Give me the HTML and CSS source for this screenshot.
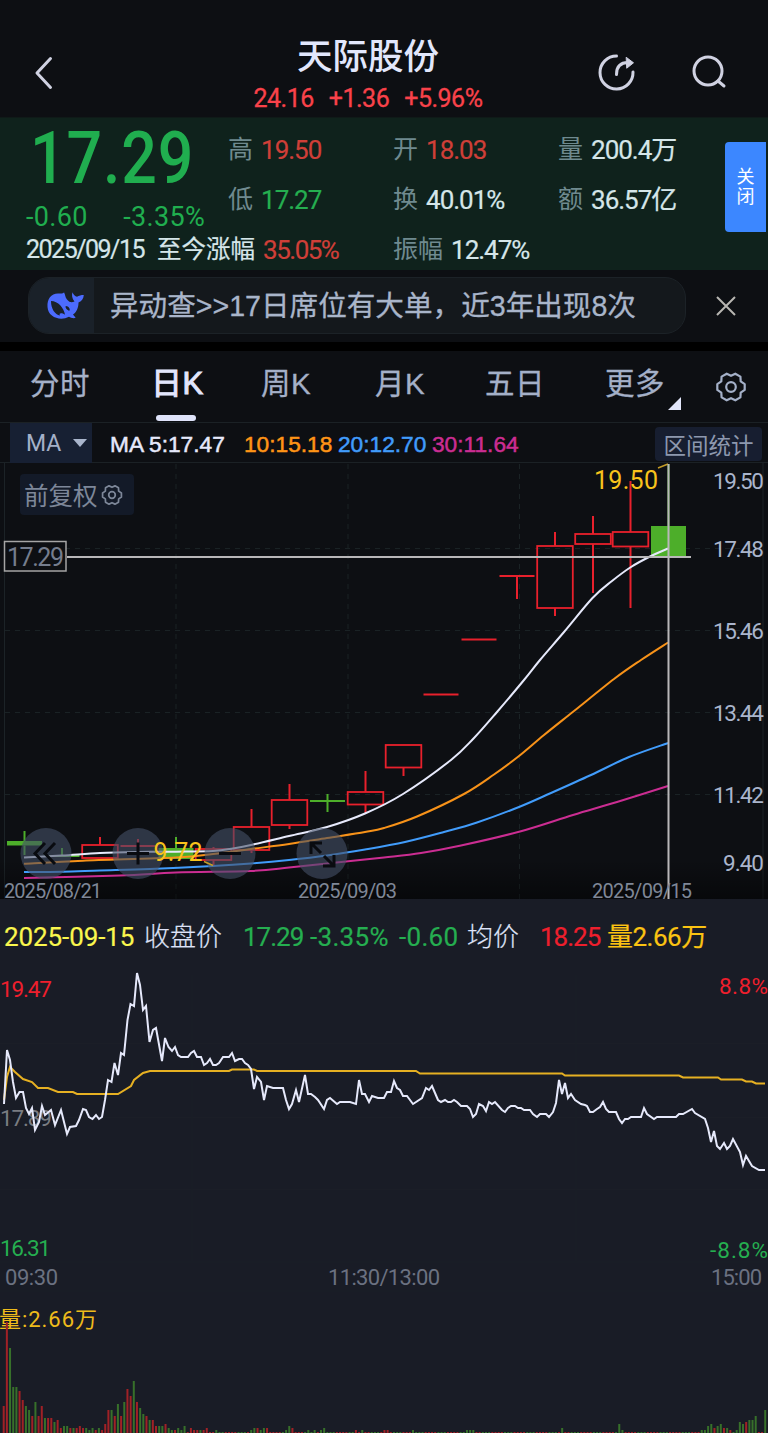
FILE: index.html
```html
<!DOCTYPE html>
<html lang="zh-CN">
<head>
    <meta charset="UTF-8">
    <meta name="viewport" content="width=device-width, initial-scale=1.0">
    <title>天际股份</title>
    <link rel="stylesheet" href="styles.css">
</head>
<body>
    <svg class="defs" width="0" height="0">
        <symbol id="gear" viewBox="0 0 32 32">
            <path d="M16 4.800 L20.300 2.700 L25.400 5.600 L25.700 10.400 L29.700 13.100 V18.900 L25.700 21.600 L25.400 26.400 L20.300 29.300 L16 27.200 L11.700 29.300 L6.600 26.400 L6.300 21.600 L2.300 18.900 V13.100 L6.300 10.400 L6.600 5.600 L11.700 2.700 Z"/>
            <circle cx="16" cy="16" r="4.800"/>
        </symbol>
    </svg>

    <header class="header">
        <svg class="back" width="20" height="34" viewBox="0 0 20 34"><path d="M16.500 2.500 L3 17 L16.500 31.500"/></svg>
        <div class="title">
            <h1>天际股份</h1>
            <div class="title-quote"><span>24.16</span><span>+1.36</span><span>+5.96%</span></div>
        </div>
        <svg class="share" width="40" height="40" viewBox="0 0 40 40">
            <path d="M19.500 3 A16.500 16.500 0 1 0 36 19"/>
            <path d="M19.500 21.500 C19.500 14 23 9.500 31 9.500"/>
            <path class="solid" d="M29.500 4.500 L36.500 9.800 L30 15 Z"/>
        </svg>
        <svg class="search" width="36" height="36" viewBox="0 0 36 36">
            <circle cx="17" cy="17" r="14"/><path d="M27 27 L33 32"/>
        </svg>
    </header>

    <section class="quote">
        <div class="now">
            <div class="price">17.29</div>
            <div class="change"><span>-0.60</span><span>-3.35%</span></div>
        </div>
        <div class="stat"><label>高</label><b class="red">19.50</b></div>
        <div class="stat"><label>开</label><b class="red">18.03</b></div>
        <div class="stat"><label>量</label><b>200.4万</b></div>
        <div class="stat"><label>低</label><b class="green">17.27</b></div>
        <div class="stat"><label>换</label><b>40.01%</b></div>
        <div class="stat"><label>额</label><b>36.57亿</b></div>
        <div class="stat since"><b>2025/09/15</b><b class="cn">至今涨幅</b><b class="red">35.05%</b></div>
        <div class="stat"><label>振幅</label><b>12.47%</b></div>
        <button class="close-tab">关<br>闭</button>
    </section>

    <section class="notice">
        <div class="pill">
            <div class="whale">
                <svg width="38" height="28" viewBox="0 0 38 28">
                    <path fill-rule="evenodd" d="M.5 15 C0 7 4 1.500 11 1.500 C14 1.500 16 2 17 .3 C18.500 3 18 5 20 7.500 C23 11 25 10.500 27.500 9.500 C25 6.500 24.500 3 25.500 .3 C26.500 3 28 4.300 30 4.800 C32 3.500 34 3 36.800 3 C36.500 6.500 35 9 31.500 10.500 C31.500 15 30 20 26 22.500 C27 24 28.500 25 28.500 26 C25.500 26.500 23.500 25.500 22 24.800 C13 29.500 1 25 .5 15 Z M4 9 C4 17 8 22.500 13 23.500 C11.500 21 14.500 20.500 18 22.800 C17 16 11 9 4 9 Z M19 14 C17 15 21.500 19.500 22.500 18.500 C23.500 17 21.500 14 19 14 Z"/>
                </svg>
            </div>
            <p>异动查&gt;&gt;17日席位有大单，近3年出现8次</p>
        </div>
        <svg class="close" width="22" height="22" viewBox="0 0 22 22"><path d="M2 2 L20 20 M20 2 L2 20"/></svg>
    </section>

    <nav class="tabs">
        <a>分时</a>
        <a class="active">日K</a>
        <a>周K</a>
        <a>月K</a>
        <a>五日</a>
        <a class="more">更多</a>
        <svg class="gear" width="32" height="32"><use href="#gear"/></svg>
    </nav>

    <section class="ma-bar">
        <div class="ma-select">MA<i></i></div>
        <span class="ma5">MA 5:17.47</span>
        <span class="ma10">10:15.18</span>
        <span class="ma20">20:12.70</span>
        <span class="ma30">30:11.64</span>
        <button class="range">区间统计</button>
    </section>

    <section class="kline">
        <svg width="768" height="436" viewBox="0 463 768 436">
            <defs>
                <linearGradient id="fade" x1="0" y1="0" x2="0" y2="1">
                    <stop offset="0" stop-color="#000" stop-opacity="0"/>
                    <stop offset="1" stop-color="#000" stop-opacity=".45"/>
                </linearGradient>
            </defs>
            <path class="grid" d="M5 548.500 H762 M5 630.500 H762 M5 712.500 H762 M5 794.500 H762 M176 464 V899 M348 464 V899 M519.500 464 V899"/>
            <path class="frame" d="M4.500 463 V899 M763 463 V899"/>
            <rect y="860" width="768" height="39" fill="url(#fade)"/>
            <g id="candles"></g>
            <g id="ma-lines"></g>
            <g class="tools">
                <circle cx="46" cy="853.500" r="25.500"/>
                <circle cx="138" cy="853.500" r="25.500"/>
                <circle cx="230" cy="853.500" r="25.500"/>
                <circle cx="322" cy="853.500" r="25.500"/>
                <path d="M45 843 L35 853.500 L45 864 M55 843 L45 853.500 L55 864"/>
                <path d="M127 853.500 H149 M138 842.500 V864.500"/>
                <path d="M219 853.500 H241"/>
                <path d="M311 854 V843 H322 M311 843 L321 853 M334 855 V866 H323 M334 866 L324 856"/>
            </g>
            <path class="mark" d="M204 861.500 L213 865.500 M658 468 L668 464"/>
            <text class="extreme" x="153.500" y="861" textLength="49">9.72</text>
            <text class="extreme" x="594" y="488.500" textLength="64">19.50</text>
            <path class="cross" d="M67 557 H691 M668.500 464 V899"/>
            <rect class="tag" x="4.500" y="541.500" width="61.500" height="29.500"/>
            <text class="tag-text" x="7" y="566" textLength="57">17.29</text>
            <g class="axis">
                <text x="713" y="489" textLength="51">19.50</text>
                <text x="713" y="556.500" textLength="51">17.48</text>
                <text x="713" y="638.500" textLength="51">15.46</text>
                <text x="713" y="720.500" textLength="51">13.44</text>
                <text x="713" y="802.500" textLength="51">11.42</text>
                <text x="723" y="870.500" textLength="41">9.40</text>
            </g>
            <g class="dates">
                <text x="4" y="897.500" textLength="98">2025/08/21</text>
                <text x="298" y="897.500" textLength="99">2025/09/03</text>
                <text x="592" y="897.500" textLength="100">2025/09/15</text>
            </g>
        </svg>
        <div class="fuquan">前复权<svg width="22" height="22"><use href="#gear"/></svg></div>
    </section>

    <section class="minute">
        <div class="minute-head">
            <span class="yellow">2025-09-15</span>
            <span class="name">收盘价</span>
            <span class="green">17.29</span>
            <span class="green wide">-3.35%</span>
            <span class="green wide">-0.60</span>
            <span class="name">均价</span>
            <span class="red">18.25</span>
            <span class="gold">量2.66万</span>
        </div>
        <svg width="768" height="458" viewBox="0 975 768 458">
            <path class="minute-grid" d="M0 1043.500 H768 M0 1117.500 H768 M0 1189.500 H768 M0 1262 H768 M0 1291 H768 M192 975 V1262 M576 975 V1262"/>
            <g class="scale">
                <text class="up" x="0" y="996.500" textLength="52">19.47</text>
                <text class="flat" x="0" y="1126" textLength="52">17.89</text>
                <text class="down" x="0" y="1256" textLength="51">16.31</text>
                <text class="up" x="719" y="994" textLength="49">8.8%</text>
                <text class="down" x="710" y="1258" textLength="58">-8.8%</text>
            </g>
            <g class="times">
                <text x="5" y="1284.500" textLength="53">09:30</text>
                <text x="328" y="1284.500" textLength="112">11:30/13:00</text>
                <text x="711" y="1284.500" textLength="51">15:00</text>
            </g>
            <g id="minute-lines"></g>
            <text class="volume-text" x="-1" y="1327" textLength="98">量:2.66万</text>
            <g id="volume"></g>
        </svg>
    </section>

    <script src="script.js"></script>
</body>
</html>
```
FILE: styles.css
```css
* {
    box-sizing: border-box;
}

body {
    margin: 0;
    width: 768px;
    height: 1433px;
    overflow: hidden;
    background-color: #0d0f13;
    color: #b0bbd0;
    font-family: Roboto, "Noto Sans CJK SC", sans-serif;
}

svg {
    display: block;
    fill: none;
    overflow: visible;
}

.defs {
    position: absolute;
}

button {
    border: none;
    padding: 0;
    font-family: inherit;
}

.red {
    color: #cf3f38;
}

.green {
    color: #25ae50;
}

/* 顶部 */
.header {
    display: flex;
    height: 118px;
    padding-left: 34px;
    border-bottom: 1px solid #0f1a18;
}

.header svg {
    stroke: #d0d2e2;
    stroke-width: 3;
    stroke-linecap: round;
    stroke-linejoin: round;
}

.header .solid {
    fill: #d0d2e2;
    stroke-width: 1;
}

.back {
    margin-top: 56px;
}

.title {
    width: 300px;
    margin-left: 164px;
    padding-top: 31px;
    text-align: center;
}

h1 {
    margin: 0;
    height: 52px;
    line-height: 52px;
    font-size: 35.500px;
    font-weight: 500;
    color: #e2e7fc;
}

.title-quote {
    display: flex;
    justify-content: center;
    gap: 15px;
    line-height: 32px;
    font-size: 25px;
    letter-spacing: -0.500px;
    color: #f9424a;
    -webkit-text-stroke: 0.300px;
}

.share {
    margin: 53px 0 0 79px;
}

.search {
    margin: 54px 0 0 54px;
}

/* 行情 */
.quote {
    position: relative;
    display: grid;
    grid-template-columns: 202px 165px 165px 165px;
    grid-template-rows: 50px 50px 50px;
    height: 152px;
    padding: 7px 0 0 26px;
    background-color: #0f221c;
}

.now {
    grid-row: 1 / 3;
    color: #20ae4f;
}

.price {
    margin-left: 4px;
    height: 68px;
    line-height: 68px;
    font-size: 72px;
    font-weight: 500;
    letter-spacing: 1px;
    transform: scaleX(0.870);
    transform-origin: left;
}

.change {
    display: flex;
    justify-content: space-between;
    width: 179px;
    line-height: 48px;
    font-size: 27px;
    letter-spacing: 0.300px;
}

.stat {
    display: flex;
    gap: 8px;
    line-height: 50px;
    font-size: 26px;
    white-space: nowrap;
}

.stat label {
    color: #6f8a8f;
    font-size: 25px;
}

.stat b {
    font-weight: 400;
    letter-spacing: -1px;
    -webkit-text-stroke: 0.200px;
}

.stat b:not([class]),
.stat .cn {
    color: #d5e6e9;
}

.since {
    grid-column: 1 / 3;
}

.since b:first-child {
    font-size: 25px;
    letter-spacing: -1.500px;
}

.since .cn {
    margin-left: 5px;
    font-size: 24.500px;
    letter-spacing: 0;
}

.since .red {
    letter-spacing: -1.500px;
}

.close-tab {
    position: absolute;
    left: 725px;
    top: 24px;
    width: 41px;
    height: 90px;
    border-radius: 4px 0 0 4px;
    background-color: #3c87ff;
    color: #fff;
    font-size: 18px;
    line-height: 20px;
}

/* 提示条 */
.notice {
    display: flex;
    align-items: center;
    height: 81px;
    padding: 0 31px 9px 28px;
    border-bottom: 9px solid #000;
}

.pill {
    display: flex;
    width: 658px;
    height: 57px;
    margin-top: 8px;
    border: 1px solid #1c2227;
    border-radius: 21px;
    background-color: #14181c;
    overflow: hidden;
}

.whale {
    display: flex;
    align-items: center;
    width: 65px;
    padding-left: 18px;
    background-color: #1a2129;
}

.whale svg {
    fill: #4c6bfe;
}

.pill p {
    margin: 0 0 0 16px;
    line-height: 56px;
    font-family: "Liberation Sans", "Noto Sans CJK SC", sans-serif;
    font-size: 28.600px;
    color: #a9b5ca;
    -webkit-text-stroke: 0.300px;
}

.close {
    margin: 8px 0 0 29px;
    stroke: #b8b6b2;
    stroke-width: 2;
}

/* 周期 */
.tabs {
    display: grid;
    grid-template-columns: 121px 110px 114px 110px 120px 110px 32px;
    height: 71px;
    padding-left: 30px;
    line-height: 66px;
    font-family: "Liberation Sans", "Noto Sans CJK SC", sans-serif;
    font-size: 29.500px;
    color: #a4b0c8;
    -webkit-text-stroke: 0.300px;
}

.tabs a {
    position: relative;
    letter-spacing: 0.500px;
}

.tabs .active {
    color: #e2e6fc;
    font-size: 31px;
    -webkit-text-stroke: 1px;
}

.tabs .active::after {
    content: "";
    position: absolute;
    left: 5px;
    bottom: 1px;
    width: 40px;
    height: 6px;
    border-radius: 3px;
    background-color: #dfe3fa;
}

.tabs .more::after {
    content: "";
    position: absolute;
    left: 63px;
    top: 46px;
    border-left: 13px solid transparent;
    border-bottom: 13px solid #e2e6fa;
}

.gear {
    margin-top: 20px;
    stroke: #a4b0c8;
    stroke-width: 2.200;
    stroke-linejoin: round;
}

/* 均线 */
.ma-bar {
    display: grid;
    grid-template-columns: 100px 134px 94px 94px 223px 107px;
    height: 41px;
    padding-left: 10px;
    border-top: 1px solid #1b2125;
    border-bottom: 1px solid #1b2125;
    line-height: 43px;
    font-family: "Liberation Sans", sans-serif;
    font-size: 22.700px;
    -webkit-text-stroke: 0.500px;
    white-space: nowrap;
}

.ma-select {
    display: flex;
    align-items: center;
    gap: 12px;
    width: 82px;
    height: 40px;
    padding-left: 16px;
    background-color: #172033;
    color: #a4b0c8;
    font-family: Roboto, sans-serif;
    font-size: 23px;
    -webkit-text-stroke: 0;
}

.ma-select i {
    border: 7px solid transparent;
    border-top: 8px solid #a9b5cc;
    border-bottom: none;
}

.ma5 {
    color: #e6e9fb;
}

.ma10 {
    color: #ff9416;
}

.ma20 {
    color: #419cfb;
}

.ma30 {
    color: #cb2d92;
}

.range {
    height: 34px;
    margin-top: 4px;
    border-radius: 4px;
    background-color: #171e30;
    color: #8d98ae;
    font-family: "Noto Sans CJK SC", sans-serif;
    font-size: 22.500px;
    line-height: 34px;
    -webkit-text-stroke: 0;
}

/* K线 */
.kline {
    position: relative;
    height: 436px;
}

.grid {
    stroke: #1a2225;
    stroke-dasharray: 5 5;
}

.frame {
    stroke: #1c2327;
}

.tools circle {
    fill: #455068;
    fill-opacity: 0.600;
}

.tools path {
    stroke: #090b10;
    stroke-width: 3;
}

.mark {
    stroke: #c49c26;
    stroke-width: 1.500;
}

.extreme {
    fill: #f8c31c;
    font-size: 25px;
}

.cross {
    stroke: #b9b7b9;
    stroke-width: 2;
}

.tag {
    fill: #0d0f13;
    stroke: #a5a5a5;
    stroke-width: 1.500;
}

.tag-text {
    fill: #757d8d;
    font-size: 25px;
}

.axis {
    fill: #aab5cc;
    font-size: 22.500px;
}

.dates {
    fill: #7f8797;
    font-size: 20px;
}

.fuquan {
    position: absolute;
    left: 20px;
    top: 11px;
    display: flex;
    align-items: center;
    gap: 3px;
    width: 114px;
    height: 41px;
    padding-left: 4px;
    border-radius: 4px;
    background-color: #131a28;
    color: #7d8799;
    font-size: 24.500px;
}

.fuquan svg {
    stroke: #7d8799;
    stroke-width: 2.500;
    stroke-linejoin: round;
}

/* 分时 */
.minute {
    height: 534px;
    background-color: #191c26;
}

.minute-head {
    display: grid;
    grid-template-columns: 140px 99px 67px 89px 68px 73px 67px 110px;
    height: 76px;
    padding-left: 4px;
    line-height: 77px;
    font-size: 26px;
    letter-spacing: -1px;
    white-space: nowrap;
    -webkit-text-stroke: 0.200px;
}

.minute-head .yellow {
    color: #faf74e;
    letter-spacing: -0.100px;
}

.minute-head .name {
    color: #dfe3f8;
    font-weight: 300;
    letter-spacing: 0;
}

.minute-head .wide {
    letter-spacing: 0.300px;
}

.minute-head .red {
    color: #ee1f2d;
}

.minute-head .gold {
    color: #fbc312;
    letter-spacing: -0.500px;
}

.minute-grid {
    stroke: #1b1e27;
}

.scale {
    font-size: 22.500px;
}

.up {
    fill: #ee1f2d;
}

.down {
    fill: #25ae50;
}

.flat {
    fill: #797c82;
}

.times {
    fill: #6b7181;
    font-size: 22px;
}

.volume-text {
    fill: #eebb1b;
    font-size: 22px;
}
```
FILE: script.js
```javascript
const RED = '#e8202c';
const GREEN = '#4dae2a';

function add(id, tag, attrs) {
    const el = document.createElementNS('http://www.w3.org/2000/svg', tag);
    for (const key in attrs) {
        el.setAttribute(key, attrs[key]);
    }
    document.getElementById(id).appendChild(el);
}

// K线: 中心x, 最高, 实体上, 实体下, 最低, 颜色
const candles = [
    [24.5, 831, 841, 845.5, 855, 'g'],
    [62, 848, 856, 856, 857, 'g'],
    [100, 837, 845, 858, 858, 'r'],
    [138, 839, 846, 846, 846, 'r'],
    [176, 837, 848, 859, 859, 'g'],
    [213.5, 847, 849, 860, 865, 'r'],
    [251.5, 809, 827, 850, 853, 'r'],
    [289.5, 784, 800, 825, 829, 'r'],
    [327.5, 794, 801, 801, 812, 'g'],
    [365.5, 771, 792, 804.5, 813, 'r'],
    [403.5, 745, 745, 767.5, 776, 'r'],
    [441, 694.5, 694.5, 694.5, 694.5, 'r'],
    [479, 639.5, 639.5, 639.5, 639.5, 'r'],
    [517, 576, 576, 576, 599, 'r'],
    [555, 532, 546, 608, 616, 'r'],
    [593, 516, 534, 544, 593, 'r'],
    [630.5, 481, 532, 546.5, 608, 'r'],
    [668.5, 464, 526, 557, 557, 'g']
];

candles.forEach(function([x, high, top, bottom, low, c]) {
    const color = c === 'r' ? RED : GREEN;
    add('candles', 'path', {
        d: `M${x} ${high} V${top} M${x} ${bottom} V${low}`, stroke: color, 'stroke-width': 2
    });
    if (top === bottom) {
        add('candles', 'path', { d: `M${x - 17.5} ${top} h35`, stroke: color, 'stroke-width': 2 });
    } else if (c === 'g') {
        add('candles', 'rect', { x: x - 17.5, y: top, width: 35, height: bottom - top, fill: color });
    } else {
        add('candles', 'rect', {
            x: x - 17.8, y: top, width: 35.6, height: bottom - top, stroke: color, 'stroke-width': 1.8
        });
    }
});

// 平滑曲线
function smooth(p) {
    let d = `M${p[0][0]} ${p[0][1]}`;
    for (let i = 0; i < p.length - 1; i++) {
        const a = p[i - 1] || p[i], b = p[i], c = p[i + 1], e = p[i + 2] || c;
        d += ` C${b[0] + (c[0] - a[0]) / 6} ${b[1] + (c[1] - a[1]) / 6} ${c[0] - (e[0] - b[0]) / 6} ${c[1] - (e[1] - b[1]) / 6} ${c[0]} ${c[1]}`;
    }
    return d;
}

const maLines = {
    '#cb2d92': [[24, 878], [120, 875.5], [176, 872.5], [251, 871], [289, 867.5], [327, 863.5], [384, 857.5], [421, 853], [461, 845.5], [520, 831.5], [573, 815], [617, 802], [668, 786]],
    '#419cfb': [[24, 872], [62, 871.7], [100, 870.5], [150, 869], [213, 866], [251, 863.5], [289, 860], [327, 855.5], [365, 849.5], [405, 842], [444, 832], [477, 822.5], [519, 807], [551, 793], [591, 775], [629, 757], [668, 743]],
    '#f79219': [[24, 863.7], [83, 860.7], [176, 857.5], [213, 854], [251, 849], [289, 844], [327, 838], [365, 832], [384, 828], [417, 816.5], [464, 794], [494, 774.5], [519, 756], [544, 735], [574, 711], [614, 679], [641, 660], [668, 642.5]],
    '#e6e9fb': [[24, 857.5], [62, 855.5], [100, 853], [138, 852], [176, 851.7], [213, 851], [233, 848.5], [251, 845], [289, 836], [327, 827], [365, 813.5], [403, 794], [451, 760], [474, 738], [497, 712], [524, 680], [540, 660], [564, 632], [592.5, 598], [612, 581], [631, 567], [650, 556.5], [668, 548.5]]
};

for (const color in maLines) {
    add('ma-lines', 'path', { d: smooth(maLines[color]), stroke: color, 'stroke-width': 2 });
}

// 分时: 均价和现价
const avg = '4,1100 7,1077 10,1067 15,1072 23,1079 32,1082 38,1088 48,1088 58,1092 73,1092 77,1094 118,1094 131,1086 134,1080 143,1073 150,1071 229,1071 232,1069.500 254,1069.500 257,1071 416,1071 420,1073.500 562,1073.500 565,1075.500 679,1075.500 683,1077.500 718,1077.500 721,1079.500 742,1079.500 746,1081.500 752,1081.500 756,1083.500 765,1083.500';
const price = '4,1104 7,1050 10,1060 13,1082 16,1098 19.500,1092 23,1092 26,1108 29,1114 32,1108 35,1130 39,1122 42,1106 45,1115 51,1110 55,1125 61,1110 67,1134 70,1127 76,1126 79,1120 83,1109 86,1110 89,1117 92.500,1119 96,1115 99,1119 102,1117 105,1100 108,1080 111.500,1082 114.500,1063 118,1075 121,1053 124,1055 127.500,1020 130.500,1004 134,1006 137,973 140,985 143,1010 146,1006 149.500,1042 153,1030 156,1028 162,1061 165,1038 168.500,1047 172,1051 175,1047 178,1055 181,1057 188,1057 191,1053 194,1051 197,1057 201,1057 204,1065 207,1063 210,1059 213,1065 216,1065 219,1063 223,1057 229,1057 232,1053 235,1061 239,1059 242,1059 245,1063 248,1065 251,1069 254,1089 257,1077 261,1082 264,1100 267,1086 273,1088 283,1088 286,1100 289,1109 292,1104 296,1090 299,1102 305,1075 308,1094 311,1094 315,1097 318,1100 324,1109 327,1100 330,1098 337,1104 340,1102 350,1102 356,1104 359,1080 362,1094 365,1094 369,1102 372,1096 378,1098 384,1098 387,1092 391,1092 394,1081 397,1088 400,1090 403,1096 407,1096 413,1104 422,1098 426,1088 429,1090 432,1086 435,1093 438,1100 441,1102 445,1100 448,1102 451,1102 454,1100 457,1102 461,1106 467,1106 470,1109 473,1117 476,1114 479,1104 483,1106 486,1111 489,1102 492,1104 495,1102 502,1110 505,1112 508,1108 511,1106 515,1106 518,1108 521,1108 524,1110 530,1110 533,1114 537,1117 540,1114 546,1114 549,1117 553,1112 556,1103 559,1080 562,1094 565,1083 568,1098 571,1094 575,1100 581,1104 585,1105 587,1106 590,1112 593,1112 597,1109 600,1107 603,1102 606,1109 609,1112 616,1112 619,1119 622,1123 625,1119 628,1119 631,1117 641,1117 644,1108 647,1114 654,1119 657,1117 676,1117 679,1114 683,1114 692,1109 695,1113 705,1119 708,1128 711,1142 714,1131 717,1146 720,1149 724,1143 727,1149 730,1146 733,1139 740,1152 743,1165 746,1156 752,1166 759,1170 765,1170';

add('minute-lines', 'polyline', { points: avg, stroke: '#e6b022', 'stroke-width': 2 });
add('minute-lines', 'polyline', { points: price, stroke: '#e6e9fb', 'stroke-width': 2 });

// 成交量, 每分钟一根
const volume = ('r27 r111 g85 g46 g46 r42 r33 g27 g23 r17 g31 r17 r27 g15 r15 r15 g11 r13 r5 g7 g7 r5 g5 r5 r7 r5 g5 g3 g5 r3 g5 r3 ' +
    'r9 r23 g23 r17 g29 r17 g31 r44 r37 g52 r31 g25 g19 r17 g13 r13 r7 g7 g7 r9 g5 g3 r3 g5 g3 g7 r1 r5 r3 r3 g3 r3 r5').split(' ');
const later = {
    67: 'g3', 78: 'g3', 79: 'g5', 80: 'r5', 81: 'g3', 82: 'g5', 83: 'r5', 89: 'g3', 90: 'g7', 91: 'r5', 96: 'g3', 98: 'g3',
    100: 'g3', 101: 'g5', 111: 'r3', 113: 'g3', 120: 'r3', 121: 'r3', 129: 'g3', 146: 'g3', 147: 'g3', 148: 'g3', 176: 'g5',
    194: 'g9', 195: 'g3', 220: 'g3', 221: 'g3', 222: 'g7', 223: 'g9', 224: 'r5', 225: 'g7', 226: 'g9', 227: 'r5', 228: 'g5',
    229: 'r3', 231: 'g3', 232: 'g11', 233: 'g9', 234: 'r11', 235: 'g13', 236: 'g13', 237: 'g17', 240: 'g23'
};

for (let i = 0; i <= 240; i++) {
    const bar = volume[i] || later[i] || (i % 7 < 4 ? 'r1' : 'g1');
    const h = Number(bar.slice(1));
    add('volume', 'rect', {
        x: 2.7 + i * 3.173, y: 1433 - h, width: 2, height: h, fill: bar[0] === 'r' ? '#a02126' : '#37702a'
    });
}
```
